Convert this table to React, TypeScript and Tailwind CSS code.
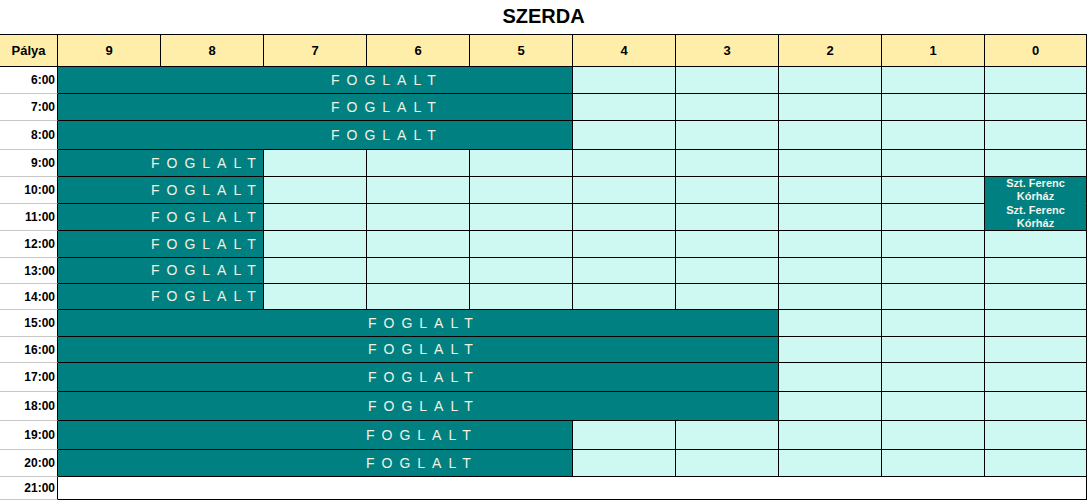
const cols = ["9", "8", "7", "6", "5", "4", "3", "2", "1", "0"];

const spanCls: Record<number, string> = {
  2: "col-span-2",
  5: "col-span-5",
  7: "col-span-7",
  10: "col-span-10",
};

type Row = { t: string; h: string; span: number; pl: string; szt?: "top" | "bottom" };

const rows: Row[] = [
  { t: "6:00", h: "h-[27px]", span: 5, pl: "pl-[273px]" },
  { t: "7:00", h: "h-[27px]", span: 5, pl: "pl-[273px]" },
  { t: "8:00", h: "h-[29px]", span: 5, pl: "pl-[273px]" },
  { t: "9:00", h: "h-[27px]", span: 2, pl: "pl-[93px]" },
  { t: "10:00", h: "h-[27px]", span: 2, pl: "pl-[93px]", szt: "top" },
  { t: "11:00", h: "h-[27px]", span: 2, pl: "pl-[93px]", szt: "bottom" },
  { t: "12:00", h: "h-[27px]", span: 2, pl: "pl-[93px]" },
  { t: "13:00", h: "h-[26px]", span: 2, pl: "pl-[93px]" },
  { t: "14:00", h: "h-[26px]", span: 2, pl: "pl-[93px]" },
  { t: "15:00", h: "h-[27px]", span: 7, pl: "pl-[310px]" },
  { t: "16:00", h: "h-[26px]", span: 7, pl: "pl-[310px]" },
  { t: "17:00", h: "h-[29px]", span: 7, pl: "pl-[310px]" },
  { t: "18:00", h: "h-[29px]", span: 7, pl: "pl-[310px]" },
  { t: "19:00", h: "h-[29px]", span: 5, pl: "pl-[308px]" },
  { t: "20:00", h: "h-[27px]", span: 5, pl: "pl-[308px]" },
];

export default function App() {
  return (
    <div className="w-[1087px] h-[500px] bg-white font-['Liberation_Sans',Arial,sans-serif] text-black overflow-hidden">
      <div className="h-[34px] flex items-center justify-center pb-[3px] text-[20px] font-bold">SZERDA</div>

      <div className="grid grid-cols-[58px_repeat(9,103px)_102px]">
        {/* fejléc */}
        <div className="h-[33px] border-t border-b border-r border-black bg-[#ffeeaa] flex items-center justify-center text-[13px] font-bold">
          Pálya
        </div>
        {cols.map((c) => (
          <div
            key={c}
            className="h-[33px] border-t border-b border-r border-black bg-[#ffeeaa] flex items-center justify-center text-[13px] font-bold"
          >
            {c}
          </div>
        ))}

        {rows.map((r) => (
          <Line key={r.t} r={r} />
        ))}

        <div className="h-[23px] border-r border-r-black border-b border-b-[#c8c8c8] flex items-center justify-end pr-[2px] text-[12px] font-bold">
          21:00
        </div>
        <div className="col-span-10 h-[23px] border-r border-b border-black bg-white"></div>
      </div>
    </div>
  );
}

function Line({ r }: { r: Row }) {
  const free = cols.length - r.span;
  return (
    <>
      <div
        className={`${r.h} border-r border-r-black border-b border-b-[#c8c8c8] flex items-center justify-end pr-[2px] text-[12px] font-bold`}
      >
        {r.t}
      </div>
      <div
        className={`${spanCls[r.span]} ${r.h} ${r.pl} border-r border-b border-black bg-[#008080] flex items-center text-[14px] tracking-[7px] text-[#f3f1e2] whitespace-nowrap`}
      >
        FOGLALT
      </div>
      {Array.from({ length: free }).map((_, i) => {
        const last = i === free - 1;
        if (last && r.szt) {
          return (
            <div
              key={i}
              className={`${r.h} bg-[#008080] border-r border-r-black border-b ${
                r.szt === "top" ? "border-b-[#008080]" : "border-b-black"
              } flex flex-col items-center justify-center text-[11px] leading-[13px] font-bold text-[#f4f4ec]`}
            >
              <span>Szt. Ferenc</span>
              <span>Kórház</span>
            </div>
          );
        }
        return <div key={i} className={`${r.h} border-r border-b border-black bg-[#cdf9f2]`}></div>;
      })}
    </>
  );
}
